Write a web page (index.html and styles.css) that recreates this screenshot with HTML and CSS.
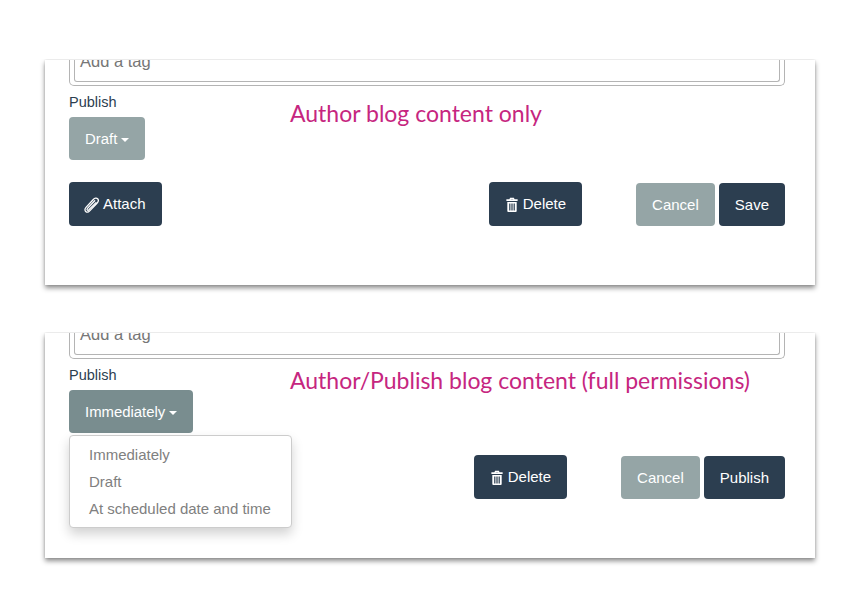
FILE: index.html
```html
<!DOCTYPE html>
<html lang="en">
<head>
    <meta charset="UTF-8">
    <title>Blog permissions</title>
    <link rel="stylesheet" href="styles.css">
</head>
<body>
    <div class="card">
        <div class="tag-box"><div class="tag-input">Add a tag</div></div>
        <div class="publish">
            <div class="publish-field">
                <div class="publish-label">Publish</div>
                <button class="btn btn-grey btn-select">Draft <span class="caret"></span></button>
            </div>
            <div class="note">Author blog content only</div>
        </div>
        <div class="actions">
            <button class="btn btn-dark btn-icon btn-attach">
                <svg class="icon icon-clip" viewBox="0 0 16 16"><path d="M14.600 5.500 6.700 13.900c-1.200 1.300-2.900 1.500-4 .5s-.9-2.700.3-4L10.300 2.500c1.400-1.500 3.300-1.700 4.300-.7s.8 2.900-.6 4.400L7.200 13.400" fill="none" stroke="currentColor" stroke-width="1.300" stroke-linecap="round"/><path d="M11.700 3.800 4.500 11.400c-.5.600-.6 1.300-.2 1.700s1.100.3 1.600-.3L13 5.600" fill="none" stroke="currentColor" stroke-width="1.300" stroke-linecap="round"/></svg>
                Attach
            </button>
            <button class="btn btn-dark btn-icon btn-delete">
                <svg class="icon" viewBox="0 0 14 16"><path d="M5 .8h4l.8 1.700H13v1.700H1V2.500h3.200zM5.700 2v.5h2.600V2z" fill="currentColor" fill-rule="evenodd"/><path d="M2 5.200h10V15a1 1 0 0 1-1 1H3a1 1 0 0 1-1-1zM4 7v7.300h1.300V7zm2.350 0v7.300h1.300V7zM8.700 7v7.300H10V7z" fill="currentColor" fill-rule="evenodd"/></svg>
                Delete
            </button>
            <button class="btn btn-grey">Cancel</button>
            <button class="btn btn-dark">Save</button>
        </div>
    </div>

    <div class="card">
        <div class="tag-box"><div class="tag-input">Add a tag</div></div>
        <div class="publish">
            <div class="publish-field">
                <div class="publish-label">Publish</div>
                <button class="btn btn-open btn-select">Immediately <span class="caret"></span></button>
                <ul class="menu">
                    <li>Immediately</li>
                    <li>Draft</li>
                    <li>At scheduled date and time</li>
                </ul>
            </div>
            <div class="note note-raised">Author/Publish blog content (full permissions)</div>
        </div>
        <div class="actions">
            <!-- Attach sits behind the open menu, only its edge shows -->
            <button class="btn btn-dark btn-icon btn-attach btn-covered"></button>
            <button class="btn btn-dark btn-icon btn-delete">
                <svg class="icon" viewBox="0 0 14 16"><path d="M5 .8h4l.8 1.700H13v1.700H1V2.500h3.200zM5.700 2v.5h2.600V2z" fill="currentColor" fill-rule="evenodd"/><path d="M2 5.200h10V15a1 1 0 0 1-1 1H3a1 1 0 0 1-1-1zM4 7v7.300h1.300V7zm2.350 0v7.300h1.300V7zM8.700 7v7.300H10V7z" fill="currentColor" fill-rule="evenodd"/></svg>
                Delete
            </button>
            <button class="btn btn-grey">Cancel</button>
            <button class="btn btn-dark">Publish</button>
        </div>
    </div>
</body>
</html>
```

FILE: styles.css
```css
body {
    margin: 0;
    padding-top: 60px;
    background: #fff;
    font-family: "Liberation Sans", Arial, sans-serif;
    font-size: 15px;
    color: #2c3e50;
}
.card {
    width: 770px;
    height: 225px;
    margin: 0 0 48px 45px;
    padding: 0 30px 0 24px;
    box-sizing: border-box;
    background: #fff;
    box-shadow: 0 3px 5px rgba(0, 0, 0, 0.45), 0 0 2px rgba(0, 0, 0, 0.12);
    clip-path: inset(-1px -12px -12px -12px);
}
.tag-box {
    height: 26px;
    padding: 0 4px 4px;
    border: 1px solid #b4b4b4;
    border-top: none;
    border-radius: 0 0 5px 5px;
    box-sizing: border-box;
}
.tag-input {
    height: 21px;
    border: 1px solid #b4b4b4;
    border-top: none;
    border-radius: 0 0 3px 3px;
    padding-left: 5px;
    font-size: 16.5px;
    line-height: 2px;
    color: #777;
    overflow: hidden;
}
.publish {
    display: flex;
    height: 96px;
    padding-top: 8px;
    box-sizing: border-box;
}
.publish-field {
    position: relative;
    width: 221px;
}
.publish-label {
    font-size: 14.5px;
    line-height: 16px;
    margin-bottom: 7px;
}
.note {
    margin-top: 4px;
    font-family: Lato, sans-serif;
    font-size: 23px;
    line-height: 30px;
    color: #c6267f;
}
.note-raised {
    margin-top: -2px;
}
.btn {
    display: inline-flex;
    align-items: center;
    justify-content: center;
    height: 43px;
    padding: 0 16px;
    border: none;
    border-radius: 4px;
    font-family: inherit;
    font-size: 15px;
    color: #fff;
}
.btn-dark {
    background: #2c3e50;
}
.btn-grey {
    background: #95a5a6;
}
.btn-open {
    background: #798d8f;
}
.btn-select {
    font-size: 14.9px;
}
.caret {
    display: inline-block;
    margin-left: 4px;
    margin-top: 2px;
    border-top: 4px solid #fff;
    border-left: 4px solid transparent;
    border-right: 4px solid transparent;
}
.actions {
    display: flex;
    align-items: flex-end;
    gap: 4px;
}
.btn-icon {
    height: 44px;
    padding-bottom: 2px;
}
.icon {
    width: 14px;
    height: 15px;
    margin-right: 4px;
    margin-top: 3px;
}
.icon-clip {
    width: 16px;
    height: 16px;
    margin-left: -2px;
}
.btn-attach {
    margin-right: auto;
}
.btn-covered {
    width: 93px;
}
.btn-delete {
    margin-right: 50px;
}
.menu {
    position: absolute;
    top: 68px;
    left: 0;
    z-index: 2;
    width: 223px;
    margin: 0;
    padding: 5px 0;
    box-sizing: border-box;
    list-style: none;
    background: #fff;
    border: 1px solid #ccc;
    border-radius: 4px;
    box-shadow: 0 6px 12px rgba(0, 0, 0, 0.18);
}
.menu li {
    padding: 0 19px;
    font-size: 15px;
    line-height: 27px;
    color: #808080;
}
```
